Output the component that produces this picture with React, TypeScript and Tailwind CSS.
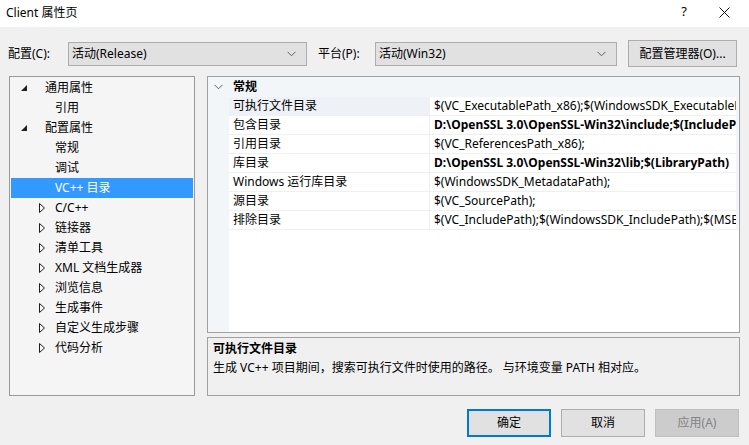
import React from "react";

const FONT = '"Noto Sans", "Noto Sans CJK SC", sans-serif';

function Expanded() {
  return (
    <svg width="7" height="7" viewBox="0 0 7 7" className="shrink-0">
      <polygon points="6,0 6,6 0,6" fill="#1e1e1e" />
    </svg>
  );
}

function Collapsed() {
  return (
    <svg width="6" height="10" viewBox="0 0 6 10" className="shrink-0">
      <polygon points="0.5,0.5 5.5,5 0.5,9.5" fill="none" stroke="#1e1e1e" strokeWidth="1" />
    </svg>
  );
}

function Chevron() {
  return (
    <svg width="9" height="6" viewBox="0 0 9 6">
      <polyline points="0.5,0.8 4.5,4.8 8.5,0.8" fill="none" stroke="#606060" strokeWidth="1" />
    </svg>
  );
}

type TreeItem = { label: string; level: 0 | 1; kind: "exp" | "col" | "none"; sel?: boolean };

const tree: TreeItem[] = [
  { label: "通用属性", level: 0, kind: "exp" },
  { label: "引用", level: 1, kind: "none" },
  { label: "配置属性", level: 0, kind: "exp" },
  { label: "常规", level: 1, kind: "none" },
  { label: "调试", level: 1, kind: "none" },
  { label: "VC++ 目录", level: 1, kind: "none", sel: true },
  { label: "C/C++", level: 1, kind: "col" },
  { label: "链接器", level: 1, kind: "col" },
  { label: "清单工具", level: 1, kind: "col" },
  { label: "XML 文档生成器", level: 1, kind: "col" },
  { label: "浏览信息", level: 1, kind: "col" },
  { label: "生成事件", level: 1, kind: "col" },
  { label: "自定义生成步骤", level: 1, kind: "col" },
  { label: "代码分析", level: 1, kind: "col" },
];

const rows: { name: string; value: string; bold?: boolean; sel?: boolean }[] = [
  { name: "可执行文件目录", value: "$(VC_ExecutablePath_x86);$(WindowsSDK_ExecutablePath);$(VS_ExecutablePath)", sel: true },
  { name: "包含目录", value: "D:\\OpenSSL 3.0\\OpenSSL-Win32\\include;$(IncludePath)", bold: true },
  { name: "引用目录", value: "$(VC_ReferencesPath_x86);" },
  { name: "库目录", value: "D:\\OpenSSL 3.0\\OpenSSL-Win32\\lib;$(LibraryPath)", bold: true },
  { name: "Windows 运行库目录", value: "$(WindowsSDK_MetadataPath);" },
  { name: "源目录", value: "$(VC_SourcePath);" },
  { name: "排除目录", value: "$(VC_IncludePath);$(WindowsSDK_IncludePath);$(MSBuild_ExecutablePath)" },
];

export default function App() {
  return (
    <div
      className="w-[749px] h-[445px] bg-[#f0f0f0] flex flex-col text-[12px] text-black overflow-hidden"
      style={{ fontFamily: FONT }}
    >
      {/* title bar */}
      <div className="h-[27px] bg-white flex items-center shrink-0">
        <span className="ml-[6px] mt-[-2px]">Client 属性页</span>
        <div className="flex-1" />
        <span className="w-[14px] text-center mr-[28px] mt-[-3px] text-[13px]">?</span>
        <svg width="11" height="11" viewBox="0 0 11 11" className="mr-[19px] mt-[-3px]">
          <path d="M0.5 0.5 L10.5 10.5 M10.5 0.5 L0.5 10.5" stroke="#111" strokeWidth="1" />
        </svg>
      </div>

      {/* config row */}
      <div className="flex items-center h-[27px] mt-[13px] shrink-0">
        <span className="ml-[8px] w-[60px]">配置(C):</span>
        <div className="w-[239px] h-[24px] bg-[#e1e1e1] border border-[#adadad] flex items-center pl-[3px] pr-[10px]">
          <span className="flex-1">活动(Release)</span>
          <Chevron />
        </div>
        <span className="ml-[11px] w-[57px]">平台(P):</span>
        <div className="w-[242px] h-[24px] bg-[#e1e1e1] border border-[#adadad] flex items-center pl-[3px] pr-[10px]">
          <span className="flex-1">活动(Win32)</span>
          <Chevron />
        </div>
        <div className="ml-[11px] w-[109px] h-[27px] bg-[#e1e1e1] border border-[#adadad] flex items-center justify-center">
          配置管理器(O)...
        </div>
      </div>

      {/* main */}
      <div className="flex mt-[9px] h-[320px] shrink-0">
        {/* tree */}
        <div className="ml-[9px] w-[186px] h-[320px] bg-[#f5f5f5] border border-[#999999] pt-[1px] px-[1px]">
          {tree.map((t) => (
            <div
              key={t.label}
              className={
                "h-[20px] flex items-center " + (t.sel ? "bg-[#3399ff] text-white" : "")
              }
            >
              {t.level === 0 ? (
                <>
                  <span className="w-[10px]" />
                  <Expanded />
                  <span className="ml-[17px]">{t.label}</span>
                </>
              ) : t.kind === "col" ? (
                <>
                  <span className="w-[28px]" />
                  <Collapsed />
                  <span className="ml-[10px]">{t.label}</span>
                </>
              ) : (
                <span className="ml-[44px]">{t.label}</span>
              )}
            </div>
          ))}
        </div>

        {/* right side */}
        <div className="ml-[12px] w-[533px] flex flex-col">
          <div className="h-[257px] bg-white border border-[#a0a0a0] flex flex-col overflow-hidden">
            <div className="h-[20px] bg-[#f3f6f9] flex items-center shrink-0">
              <span className="w-[21px] flex justify-center">
                <Chevron />
              </span>
              <span className="ml-[4px] font-bold">常规</span>
            </div>
            {rows.map((r) => (
              <div key={r.name} className="h-[19px] flex shrink-0">
                <div className="w-[21px] bg-[#f3f6f9]" />
                <div
                  className={
                    "w-[200px] flex items-center pl-[4px] border-b border-[#f0f0f0] " +
                    (r.sel ? "bg-[#eef2f6]" : "bg-white")
                  }
                >
                  {r.name}
                </div>
                <div
                  className={
                    "flex-1 min-w-0 flex items-center pl-[4px] border-b border-l border-[#f0f0f0] whitespace-nowrap overflow-hidden " +
                    (r.bold ? "font-bold" : "")
                  }
                >
                  {r.value}
                </div>
                <div className="w-[3px] bg-[#f3f6f9]" />
              </div>
            ))}
            <div className="flex-1 flex">
              <div className="w-[21px] bg-[#f3f6f9]" />
              <div className="flex-1 bg-white" />
            </div>
          </div>
          <div className="mt-[4px] h-[59px] border border-[#a0a0a0] bg-[#f0f0f0] px-[5px] pt-[2px]">
            <div className="font-bold h-[18px] flex items-center">可执行文件目录</div>
            <div className="h-[19px] flex items-center">
              生成 VC++ 项目期间，搜索可执行文件时使用的路径。 与环境变量 PATH 相对应。
            </div>
          </div>
        </div>
      </div>

      {/* buttons */}
      <div className="flex justify-end mt-[13px] mr-[10px] gap-[10px]">
        <div className="w-[84px] h-[28px] bg-[#e1e1e1] border-2 border-[#0078d7] flex items-center justify-center">
          确定
        </div>
        <div className="w-[84px] h-[28px] bg-[#e1e1e1] border border-[#adadad] flex items-center justify-center">
          取消
        </div>
        <div className="w-[84px] h-[28px] bg-[#cccccc] border border-[#bfbfbf] text-[#838383] flex items-center justify-center">
          应用(A)
        </div>
      </div>
    </div>
  );
}
